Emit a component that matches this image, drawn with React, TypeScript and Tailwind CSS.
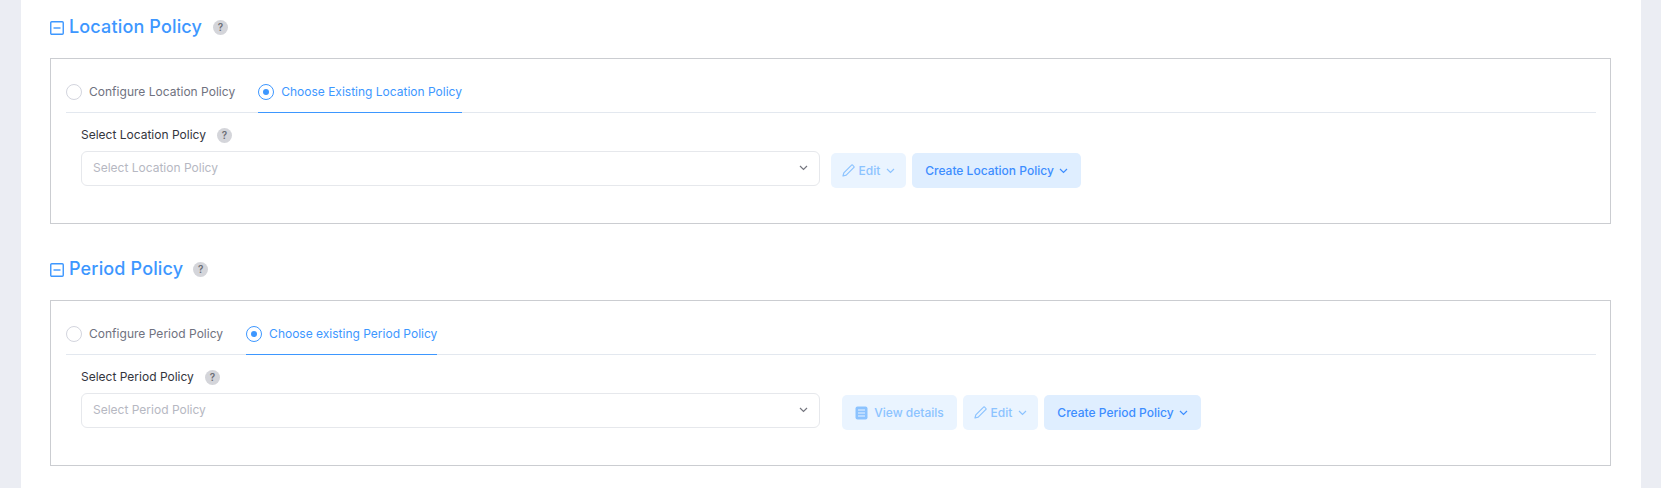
import React from "react";

const F = "font-['Inter','Liberation_Sans',sans-serif]";

function Help() {
  return (
    <span className="flex h-[15px] w-[15px] shrink-0 items-center justify-center rounded-full bg-[#d4d5da] text-[10px] font-semibold leading-none text-[#6b6d75]">?</span>
  );
}

function Minus() {
  return (
    <svg width="14" height="14" viewBox="0 0 14 14" fill="none" className="mt-[2px] shrink-0">
      <rect x="0.75" y="0.75" width="12.5" height="12.5" rx="1" stroke="#3d97ff" strokeWidth="1.4" />
      <path d="M3.5 7h7" stroke="#3d97ff" strokeWidth="1.4" />
    </svg>
  );
}

function Chevron({ className }: { className: string }) {
  return (
    <svg width="9" height="6" viewBox="0 0 9 6" fill="none" className={className}>
      <path d="M1 1l3.5 3.5L8 1" stroke="currentColor" strokeWidth="1.2" />
    </svg>
  );
}

function Pencil() {
  return (
    <svg width="13" height="13" viewBox="0 0 13 13" fill="none" className="shrink-0">
      <path d="M1 12l.8-3.2L9.3 1.3a1.1 1.1 0 0 1 1.6 0l.8.8a1.1 1.1 0 0 1 0 1.6L4.2 11.2 1 12z" stroke="#8cc3ff" strokeWidth="1.2" strokeLinejoin="round" />
    </svg>
  );
}

function Doc() {
  return (
    <svg width="13" height="14" viewBox="0 0 13 14" className="shrink-0">
      <rect x="0.5" y="0.5" width="12" height="13" rx="2" fill="#8cc3ff" />
      <path d="M3 4h7M3 7h7M3 10h7" stroke="#eaf4ff" strokeWidth="1.1" />
    </svg>
  );
}

function Radio({ on }: { on: boolean }) {
  return on ? (
    <span className="flex h-4 w-4 shrink-0 items-center justify-center rounded-full border border-[#3d97ff] bg-white">
      <span className="h-[6px] w-[6px] rounded-full bg-[#3d97ff]" />
    </span>
  ) : (
    <span className="h-4 w-4 shrink-0 rounded-full border border-[#d3d5de] bg-white" />
  );
}

function Section({
  title, titleGap, boxMt, configure, choose, tabGap, label, placeholder, buttonsMl, view, create, createW,
}: {
  title: string; titleGap: string; boxMt: string; configure: string; choose: string; tabGap: string; label: string;
  placeholder: string; buttonsMl: string; view: boolean; create: string; createW: string;
}) {
  return (
    <section>
      <div className="flex h-[20px] items-center">
        <Minus />
        <h2 className={`ml-[5px] text-[18px] font-[450] leading-[20px] tracking-[0.15px] text-[#3d97ff] ${titleGap}`}>{title}</h2>
        <Help />
      </div>
      <div className={`${boxMt} h-[166px] border border-[#cbcdd1] pl-[15px] pr-[14px] pt-[25px]`}>
        <div className={`flex h-[29px] ${tabGap} border-b border-[#e3e8ef]`}>
          <div className="flex h-[24px] items-start gap-[7px] text-[12px] leading-[16px] tracking-[0.02px] text-[#6f7280]">
            <Radio on={false} />
            <span>{configure}</span>
          </div>
          <div className="-mb-px flex h-[29px] items-start gap-[7px] border-b border-[#3d97ff] text-[12px] leading-[16px] text-[#3d97ff]">
            <Radio on={true} />
            <span>{choose}</span>
          </div>
        </div>
        <div className="pl-[15px] pt-[14px]">
          <div className="flex h-[16px] items-center gap-[11px] text-[12px] leading-[16px] text-[#33353d]">
            <span>{label}</span>
            <Help />
          </div>
          <div className="mt-[8px] flex items-start">
            <div className="flex h-[35px] w-[739px] items-center justify-between rounded-[6px] border border-[#e6e8ec] pb-[2px] pl-[11px] pr-[11px] text-[12px] text-[#b6b8c2]">
              <span>{placeholder}</span>
              <Chevron className="text-[#75767f]" />
            </div>
            <div className={`mt-[2px] flex gap-[6px] ${buttonsMl}`}>
              {view && (
                <div className="flex h-[35px] w-[115px] items-center justify-center gap-[6px] rounded-[5px] bg-[#eaf4ff] text-[12px] font-medium text-[#8cc3ff]">
                  <Doc />
                  <span>View details</span>
                </div>
              )}
              <div className="flex h-[35px] w-[75px] items-center justify-center gap-[4px] rounded-[5px] bg-[#eaf4ff] text-[12px] font-medium text-[#8cc3ff]">
                <Pencil />
                <span>Edit</span>
                <Chevron className="ml-[2px] text-[#8cc3ff]" />
              </div>
              <div className={`flex h-[35px] ${createW} items-center justify-center gap-[5px] rounded-[5px] bg-[#dfeeff] text-[12px] font-medium text-[#3d8dff]`}>
                <span>{create}</span>
                <Chevron className="text-[#3d8dff]" />
              </div>
            </div>
          </div>
        </div>
      </div>
    </section>
  );
}

export default function App() {
  return (
    <div className={`h-[488px] w-[1661px] overflow-hidden bg-[#ebedf3] pl-[21px] pr-[20px] ${F}`}>
      <div className="flex h-[488px] flex-col gap-[35px] bg-white pl-[29px] pr-[30px] pt-[17px]">
        <Section
          title="Location Policy" titleGap="mr-[11px]" boxMt="mt-[21px]"
          configure="Configure Location Policy" choose="Choose Existing Location Policy" tabGap="gap-[23px]"
          label="Select Location Policy" placeholder="Select Location Policy"
          buttonsMl="ml-[11px]" view={false} create="Create Location Policy" createW="w-[169px]"
        />
        <Section
          title="Period Policy" titleGap="mr-[10px]" boxMt="mt-[21px]"
          configure="Configure Period Policy" choose="Choose existing Period Policy" tabGap="gap-[23px]"
          label="Select Period Policy" placeholder="Select Period Policy"
          buttonsMl="ml-[22px]" view={true} create="Create Period Policy" createW="w-[157px]"
        />
      </div>
    </div>
  );
}
